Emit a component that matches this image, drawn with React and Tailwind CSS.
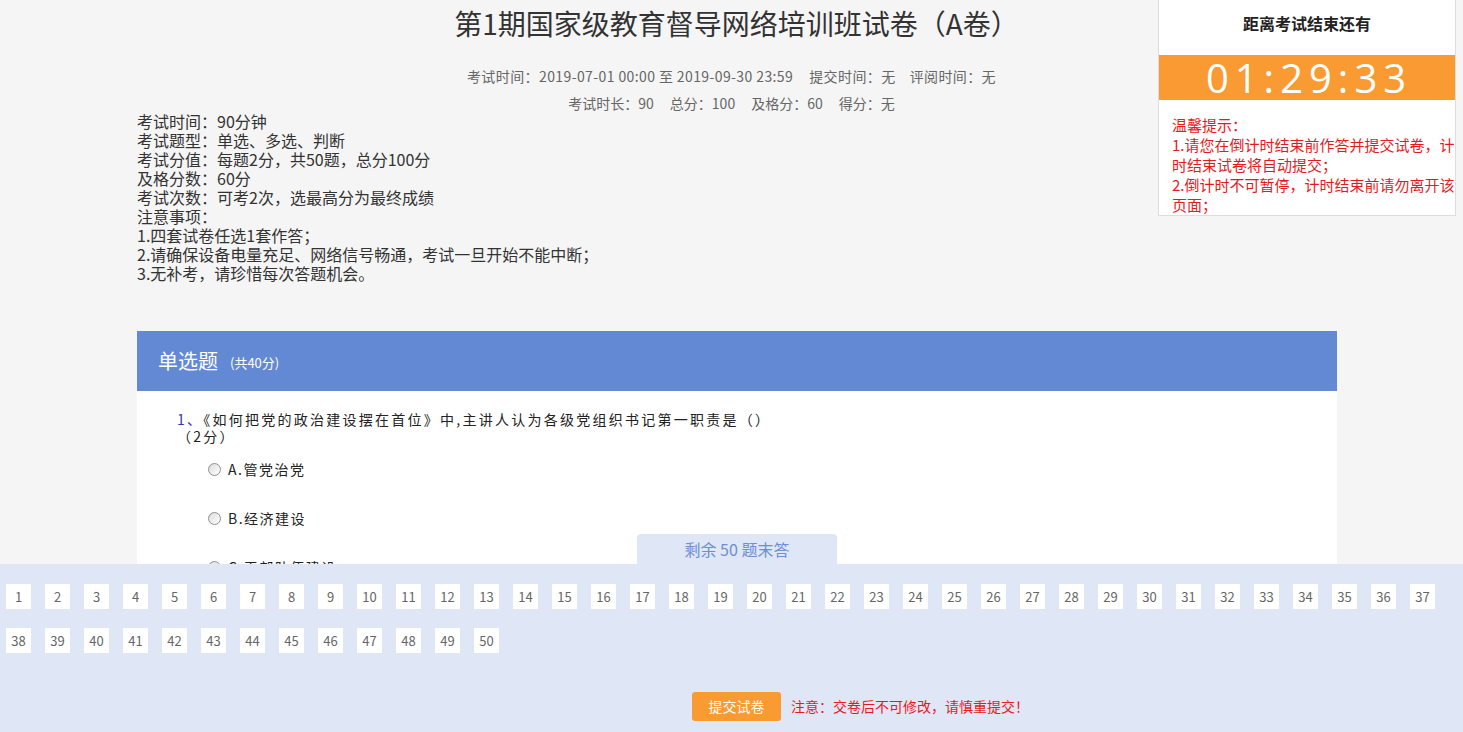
import React from 'react';

const font = { fontFamily: '"Noto Sans CJK SC", "Noto Sans", sans-serif' };

const rules = [
  '考试时间：90分钟',
  '考试题型：单选、多选、判断',
  '考试分值：每题2分，共50题，总分100分',
  '及格分数：60分',
  '考试次数：可考2次，选最高分为最终成绩',
  '注意事项：',
  '1.四套试卷任选1套作答；',
  '2.请确保设备电量充足、网络信号畅通，考试一旦开始不能中断；',
  '3.无补考，请珍惜每次答题机会。'
];

const options = ['A.管党治党', 'B.经济建设', 'C.干部队伍建设', 'D.思想建设'];

function Radio() {
  return (
    <span className="inline-block w-[13px] h-[13px] rounded-full border border-[#8f8f8f] bg-gradient-to-br from-[#dcdcdc] to-[#ffffff] mr-[7px]" />
  );
}

function Timer() {
  return (
    <div className="fixed top-0 right-[7px] w-[298px] h-[216px] bg-white border border-[#dddddd] border-t-0">
      <div className="h-[55px] flex items-center justify-center text-[16px] font-bold text-[#222] pb-[10px]">
        距离考试结束还有
      </div>
      <div
        className="h-[45px] bg-[#f99a33] flex items-center justify-center text-white text-[40px] tracking-[6px] pl-[4px]"
        style={{ fontFamily: '"Open Sans", "Noto Sans", sans-serif' }}
      >
        01:29:33
      </div>
      <div className="pt-[15px] pl-[13px] text-[15px] leading-[20px] text-[#e8191c]">
        <div>温馨提示：</div>
        <div className="whitespace-nowrap">1.请您在倒计时结束前作答并提交试卷，计</div>
        <div>时结束试卷将自动提交；</div>
        <div className="whitespace-nowrap">2.倒计时不可暂停，计时结束前请勿离开该</div>
        <div>页面；</div>
      </div>
    </div>
  );
}

function AnswerSheet() {
  const nums = Array.from({ length: 50 }, (_, i) => i + 1);
  return (
    <div className="fixed left-0 bottom-0 w-full h-[168px] bg-[#dfe6f6]">
      <div className="absolute -top-[30px] left-[637px] w-[200px] h-[30px] rounded-t-[4px] bg-[#dfe6f6] flex items-center justify-center text-[16px] text-[#6d8ed6]">
        剩余 50 题末答
      </div>
      <div className="flex flex-wrap pl-[6px] pt-[20px] gap-y-[19px]">
        {nums.map(n => (
          <div
            key={n}
            className="w-[25px] h-[25px] mr-[14px] bg-white flex items-center justify-center text-[13px] text-[#666]"
          >
            {n}
          </div>
        ))}
      </div>
      <div className="grid grid-cols-[1fr_auto_1fr] items-center mt-[39px] pl-[10px]">
        <div />
        <button className="w-[89px] h-[29px] rounded-[3px] bg-[#f99a33] text-white text-[14px]">
          提交试卷
        </button>
        <div className="pl-[10px] text-[14px] text-[#e8191c]">注意：交卷后不可修改，请慎重提交！</div>
      </div>
    </div>
  );
}

export default function App() {
  return (
    <div className="min-h-screen bg-[#f5f5f5] text-[#333] pt-[1px]" style={font}>
      <div className="text-center">
        <h1 className="text-[28px] leading-[44px] text-[#333] pl-[10px]">第1期国家级教育督导网络培训班试卷（A卷）</h1>
        <div className="mt-[18px] text-[14px] leading-[27px] text-[#666]">
          <div className="tracking-[0.4px]">
            考试时间：2019-07-01 00:00 至 2019-09-30 23:59
            <span className="ml-[16px]">提交时间：无</span>
            <span className="ml-[14px]">评阅时间：无</span>
          </div>
          <div>
            考试时长：90
            <span className="ml-[16px]">总分：100</span>
            <span className="ml-[16px]">及格分：60</span>
            <span className="ml-[16px]">得分：无</span>
          </div>
        </div>
      </div>

      <div className="ml-[137px] w-[1200px]">
        <div className="-mt-[5px] text-[16px] leading-[19px] text-[#333]">
          {rules.map(r => (
            <div key={r}>{r}</div>
          ))}
        </div>

        <div className="mt-[48px]">
          <div className="h-[60px] bg-[#6389d5] flex items-center pl-[21px] text-white">
            <span className="text-[20px]">单选题</span>
            <span className="text-[13px] ml-[12px] mt-[4px]">(共40分)</span>
          </div>
          <div className="bg-white pt-[20px] pl-[40px] pb-[200px]">
            <div className="text-[14px] leading-[17px] tracking-[2.25px] text-[#222]">
              <span className="text-[#3535c0]">1、</span>
              《如何把党的政治建设摆在首位》中,主讲人认为各级党组织书记第一职责是（）
              <div>（2分）</div>
            </div>
            <div className="pl-[31px]">
              {options.map(o => (
                <div key={o} className="h-[49px] flex items-center text-[14px] tracking-[1.5px] text-[#222]">
                  <Radio />
                  {o}
                </div>
              ))}
            </div>
          </div>
        </div>
      </div>

      <Timer />
      <AnswerSheet />
    </div>
  );
}
